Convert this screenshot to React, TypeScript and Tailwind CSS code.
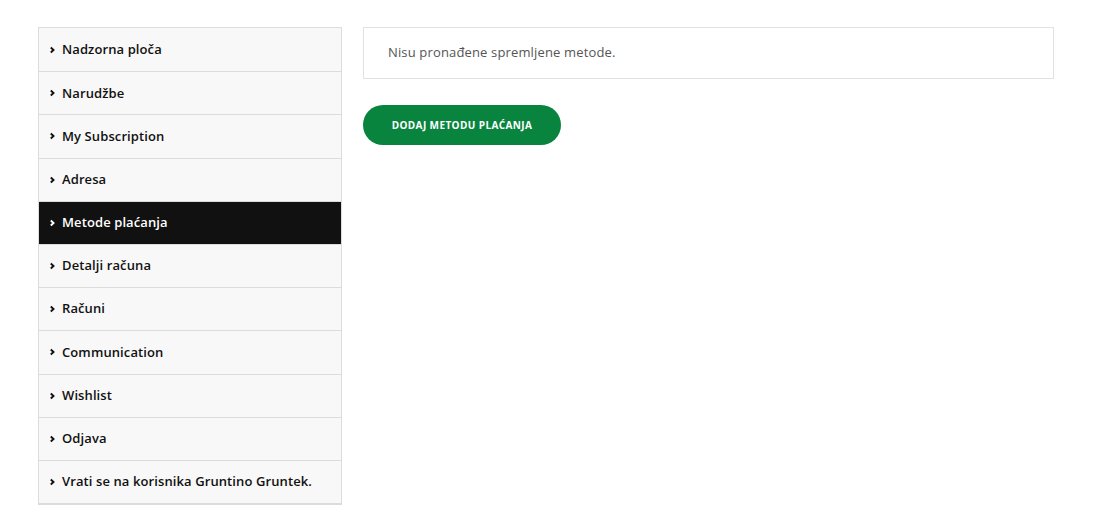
import React from "react";

const items = [
  "Nadzorna ploča",
  "Narudžbe",
  "My Subscription",
  "Adresa",
  "Metode plaćanja",
  "Detalji računa",
  "Računi",
  "Communication",
  "Wishlist",
  "Odjava",
  "Vrati se na korisnika Gruntino Gruntek.",
];

function Chevron() {
  return (
    <svg width="7" height="8" viewBox="0 0 7 8" className="mr-[6px] shrink-0">
      <path d="M1.8 1.5 L4.5 4 L1.8 6.5" fill="none" stroke="currentColor" strokeWidth="1.9" />
    </svg>
  );
}

export default function App() {
  return (
    <div className="min-h-[531px] bg-white font-['Open_Sans',sans-serif]">
      <div className="flex gap-[21px] pl-[38px] pt-[27px]">
        <nav className="w-[304px] shrink-0 border border-b-2 border-[#dcdcdc] bg-[#f8f8f8]">
          {items.map((label, i) => {
            const active = label === "Metode plaćanja";
            return (
              <a
                key={label}
                href="#"
                className={`flex h-[43.2px] items-center pl-[10px] text-[13px] font-semibold tracking-[0.1px] ${
                  i > 0 ? "border-t border-[#dcdcdc]" : ""
                } ${active ? "bg-[#111111] text-white" : "text-[#111111]"}`}
              >
                <Chevron />
                {label}
              </a>
            );
          })}
        </nav>
        <main className="w-[691px]">
          <div className="flex h-[52px] items-center border border-[#e2e2e2] pl-[24px] text-[13px] tracking-[0.15px] text-[#555555]">
            Nisu pronađene spremljene metode.
          </div>
          <button className="mt-[26px] h-[40px] w-[198px] rounded-full bg-[#08843f] text-[10px] font-bold uppercase tracking-[0.4px] text-white">
            Dodaj metodu plaćanja
          </button>
        </main>
      </div>
    </div>
  );
}
